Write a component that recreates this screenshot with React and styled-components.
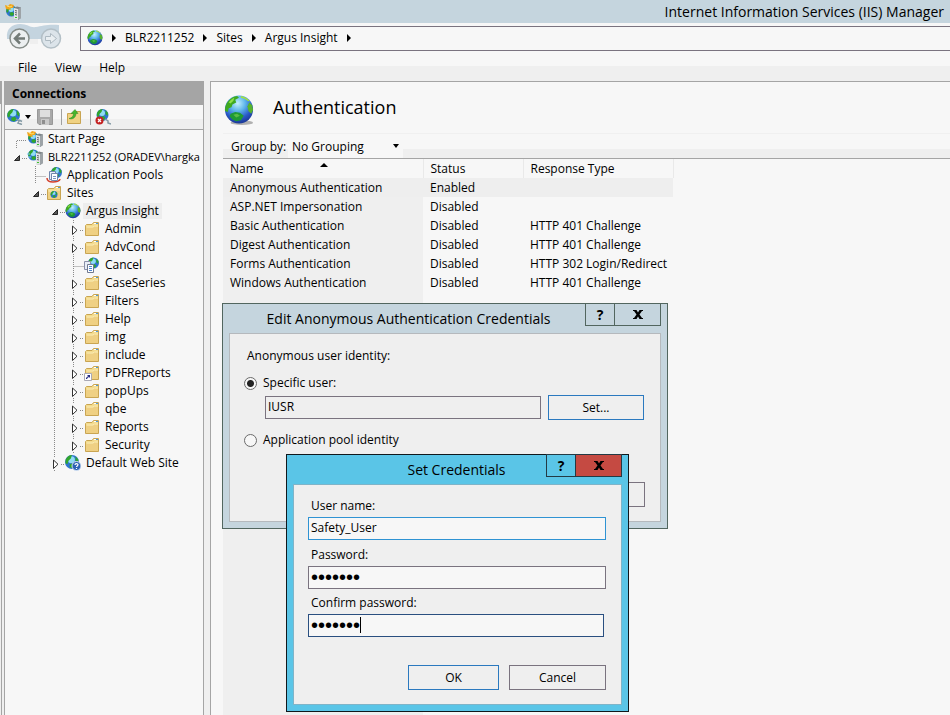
import React, { useId, useState } from "react";
import styled, { createGlobalStyle } from "styled-components";

const Global = createGlobalStyle`
  * { box-sizing: border-box; }
  body {
    margin: 0;
    background: #efefef;
    color: #000;
    font: 12px/18px "Open Sans", "Noto Sans", sans-serif;
  }
  button, input, select { font: inherit; color: inherit; border-radius: 0; }
`;

/* ---------- icons ---------- */

function Globe({ size = 16, shadow = false }) {
  const id = useId();
  return (
    <svg width={size} height={size} viewBox="0 0 32 32" aria-hidden="true">
      <defs>
        <radialGradient id={id} cx="45%" cy="28%" r="70%">
          <stop offset="0" stopColor="#c4f1fc" />
          <stop offset="0.4" stopColor="#5cb4ea" />
          <stop offset="0.75" stopColor="#2a5ac8" />
          <stop offset="1" stopColor="#1c3a9a" />
        </radialGradient>
      </defs>
      {shadow && <ellipse cx="19" cy="29.5" rx="12" ry="2.5" fill="#b0b0b0" />}
      <circle cx="16" cy="15.5" r="15" fill={`url(#${id})`} />
      <path d="M1 17C1 8 7 2 14 1L16 3 12 5 13 8 9 10 8 13 5 14 4 18Z" fill="#3faa20" />
      <path d="M5 8C7 5 9 4 11 3L10 6 7 9Z" fill="#8fe048" />
      <path d="M18 1C22 1.500 26 4 28 7L25 6 22 4 18 3Z" fill="#a5e23c" />
      <path d="M27 8L30 11 31 16 29 20 26 17 25 12Z" fill="#57b32d" />
      <path d="M7 20L12 18 17 19 21 22 18 27 13 28 9 26 6 23Z" fill="#1f9a34" />
      <path d="M10 21L14 20 17 22 13 24Z" fill="#59bd45" />
    </svg>
  );
}

const Server = () => (
  <>
    <path d="M9 4L12 2.500 16 3.500V14L13 16 9 15Z" fill="#7d8387" />
    <path d="M9 4L13 5V16L9 15Z" fill="#e2e5e6" />
    <path d="M13 5L16 3.500V14L13 16Z" fill="#9da3a7" />
    <path d="M10 6.500L12 7M10 8.500L12 9M10 10.500L12 11" stroke="#63686c" />
    <path d="M10 13.500h2" stroke="#3fc12e" />
  </>
);

const SmallGlobe = ({ x = 6, y = 6, r = 5.5 }) => (
  <g transform={`translate(${x} ${y}) scale(${r / 6})`}>
    <circle r="6" fill="#2f74d2" />
    <circle cx="-0.500" cy="-2" r="3" fill="#8fdcf5" />
    <path d="M-5.500-2C-4-5-2-6 0-6L-1-3-3-1-4 2-5.600 1ZM-2 2L1 1 3 3 1 5.500-2 4.500ZM3-5L5.500-2 5 1 3-1Z" fill="#31a62c" />
  </g>
);

const Svg16 = ({ children }) => (
  <svg width="16" height="16" viewBox="0 0 16 16" fill="none" aria-hidden="true">{children}</svg>
);

const StartIcon = () => (
  <Svg16>
    <SmallGlobe x={6.5} y={7} />
    <path d="M0 1L3 2 5 0 9 1 8 4 5 4 6 6 1 5Z" fill="#f0a51c" />
    <path d="M2 2L5 3 7 2" stroke="#ffe06a" />
    <Server />
  </Svg16>
);
const ServerIcon = () => (
  <Svg16><SmallGlobe x={6.5} y={6} /><path d="M0 5h3M1 8h3" stroke="#7ecbed" /><Server /></Svg16>
);
const PoolsIcon = () => (
  <Svg16>
    <SmallGlobe x={10.500} y={5.500} />
    <path d="M1 11C1 14 4 15 7 15S14 14 14 12" stroke="#d3402c" strokeWidth="1.500" />
    <path d="M3.500 4.500h6v8h-6z" fill="#e8eef7" stroke="#7387ac" />
    <path d="M5.500 6.500h6v7h-6z" fill="#fff" stroke="#7387ac" />
    <path d="M7 9.500h3M7 11.500h3" stroke="#7994c0" />
  </Svg16>
);
const FolderArt = () => (
  <>
    <path d="M1.500 4.500L2.500 3.500H8L9.500 1.500H14.500V14.500H1.500Z" fill="#f4dc8d" stroke="#c9a552" />
    <path d="M10 2.500h4" stroke="#fff" />
    <path d="M12 2.500h2" stroke="#4f9bd8" />
    <path d="M2 5.500H9L10.500 4.500H14V14H2Z" fill="#efd083" />
    <path d="M2.500 6h6.500L10.500 5H14" stroke="#fbefb9" />
  </>
);
const FolderIcon = () => <Svg16><FolderArt /></Svg16>;
const SitesIcon = () => <Svg16><FolderArt /><SmallGlobe x={8} y={9.5} r={3.5} /></Svg16>;
const LinkFolderIcon = () => (
  <Svg16>
    <FolderArt />
    <path d="M0.500 8.500h7v7h-7z" fill="#fff" stroke="#a9a9b5" />
    <path d="M2.500 14C2.500 12.500 3 12 5 11.500" stroke="#252c86" strokeWidth="1.200" />
    <path d="M3 10H6V13Z" fill="#252c86" />
  </Svg16>
);
const PageIcon = () => (
  <Svg16>
    <SmallGlobe x={9.500} y={6} />
    <path d="M0.500 4.500h6v8h-6z" fill="#e8eef7" stroke="#8990a8" />
    <path d="M3.500 7.500h6v8h-6z" fill="#fff" stroke="#70798f" />
    <path d="M5 9.500h3M5 11.500h3M5 13.500h3" stroke="#4d86d2" />
  </Svg16>
);
const HelpGlobeIcon = () => (
  <Svg16>
    <SmallGlobe x={7} y={7} r={7} />
    <circle cx="11.500" cy="11" r="4.500" fill="#2c62b4" stroke="#d6e4f5" />
    <path d="M10 10C10 8.200 13 8.200 13 9.800 13 11 11.500 10.800 11.500 12M11.500 13v1" stroke="#fff" strokeWidth="1.200" />
  </Svg16>
);
const ConnectIcon = () => (
  <Svg16>
    <SmallGlobe x={6.500} y={6.500} r={6.5} />
    <path d="M9 10L12 12 11 14 15 15.500M12 11L15 12.500" stroke="#849aa5" strokeWidth="1.500" />
  </Svg16>
);
const DisconnectIcon = () => (
  <Svg16>
    <SmallGlobe x={7.500} y={6} r={6} />
    <path d="M10 10L13 12 13 14 16 15" stroke="#849aa5" strokeWidth="1.500" />
    <circle cx="4.500" cy="11.500" r="4" fill="#c42323" />
    <path d="M3 10L6 13M6 10L3 13" stroke="#fff" strokeWidth="1.300" />
  </Svg16>
);
const SaveIcon = () => (
  <Svg16>
    <path d="M0.500 0.500H15.500V15.500H2L0.500 14Z" fill="#a9a9a9" stroke="#989898" />
    <path d="M3 1h10v7H3z" fill="#dedede" />
    <path d="M4 10h8v6H4z" fill="#c9c9c9" />
    <path d="M5 11h3v4H5z" fill="#8e8e8e" />
  </Svg16>
);
const UpFolderIcon = () => (
  <Svg16>
    <path d="M1.500 4.500H8L9.500 2.500H14.500V14.500H1.500Z" fill="#f0d283" stroke="#c9a552" />
    <path d="M3 9.500C6 9 7.500 7 7.500 4.500H5L9 0.500 12 4.500H10C10 8 7 11 3 9.500Z" fill="#45b62d" stroke="#2c8b22" strokeWidth="0.500" />
  </Svg16>
);

const NavIcon = () => (
  <svg width="56" height="28" viewBox="0 0 56 28" fill="none" aria-hidden="true">
    <path d="M1 14C0 5 6 0 14 0C22 0 24 4 30 3C36 2 42 0 53 1V15H1Z" fill="#c4d4df" />
    <path d="M24 15h8v5h-8z" fill="#efefef" />
    <circle cx="13.500" cy="14.500" r="9.500" fill="#eceff0" stroke="#868d89" strokeWidth="1.500" />
    <path d="M19 14.500H10M14 9.500L9 14.500 14 19.500" stroke="#737b77" strokeWidth="2.500" />
    <circle cx="45" cy="14.500" r="9.500" fill="#dce4ea" stroke="#b3bfc6" strokeWidth="1.500" />
    <path d="M39.500 12.500h5V9.500l6 5-6 5v-3h-5z" fill="#e9eef1" stroke="#adb9c1" />
  </svg>
);

const Caret = () => (
  <svg width="6" height="8" viewBox="0 0 6 8" aria-hidden="true"><path d="M1 0L5 4 1 8Z" /></svg>
);
const DownCaret = () => (
  <svg width="6" height="4" viewBox="0 0 6 4" aria-hidden="true"><path d="M0 0H6L3 4Z" /></svg>
);
const CloseIcon = () => (
  <svg width="10" height="9" viewBox="0 0 10 9" aria-hidden="true">
    <path d="M0 0H3.500L5 2.500 6.500 0H10V1H9L6.500 4.500 9 8H10V9H6.500L5 6.500 3.500 9H0V8H1L3.500 4.500 1 1H0Z" />
  </svg>
);

/* ---------- frame ---------- */

const Shell = styled.div`
  position: relative;
  display: flex;
  flex-direction: column;
  min-height: 100vh;
  overflow: hidden;
`;
const TitleBar = styled.header`
  display: flex;
  align-items: center;
  justify-content: space-between;
  height: 23px;
  padding: 0 6px 0 5px;
  background: #c5d5de;
`;
const AppTitle = styled.h1`
  margin: 0;
  font-size: 14px;
  font-weight: 400;
  white-space: nowrap;
`;
const NavBar = styled.nav`
  display: flex;
  align-items: center;
  gap: 18px;
  height: 30px;
  padding-left: 6px;
  background: #f7f7f7;
`;
const NavButtons = styled.button`
  display: flex;
  padding: 0;
  border: 0;
  background: none;
`;
const AddressBar = styled.div`
  flex: 1;
  display: flex;
  align-items: center;
  gap: 8px;
  height: 25px;
  padding-left: 6px;
  border: 1px solid #7a737f;
  border-right: 0;
`;
const Crumb = styled.a`
  color: inherit;
  text-decoration: none;
  white-space: nowrap;
`;
const MenuBar = styled.div`
  display: flex;
  align-items: center;
  gap: 18px;
  height: 28px;
  padding: 2px 0 0 18px;
  background: linear-gradient(#f7f7f7 13px, #efefef 13px);
`;
const MenuItem = styled.button`
  padding: 0;
  border: 0;
  background: none;
`;
const Workspace = styled.div`
  flex: 1;
  display: flex;
  gap: 6px;
`;
const Edge = styled.div`
  width: 2px;
  margin-right: -4px;
  border-right: 1px solid #a5a5a5;
  background: linear-gradient(#a5a5a5 23px, #efefef 23px);
`;

/* ---------- connections ---------- */

const Connections = styled.aside`
  flex: none;
  width: 200px;
  border: 1px solid #a5a5a5;
  border-bottom: 0;
  background: #f7f7f7;
  overflow: hidden;
`;
const PanelTitle = styled.h2`
  margin: 0;
  padding-left: 7px;
  height: 23px;
  font-size: 12px;
  line-height: 24px;
  background: #a5a5a5;
`;
const ToolBar = styled.div`
  display: flex;
  align-items: center;
  height: 25px;
  padding-left: 2px;
  border-bottom: 1px solid #a5a5a5;
  background: linear-gradient(#f7f7f7 14px, #efefef 14px);
`;
const Tool = styled.button`
  display: flex;
  align-items: center;
  gap: 2px;
  padding: 0;
  margin-right: ${(p) => p.$gap || 0}px;
  border: 0;
  background: none;
`;
const Divider = styled.span`
  width: 1px;
  height: 16px;
  margin-right: 4px;
  background: #a0a0a0;
`;
const Tree = styled.ul`
  margin: 0;
  padding: 0 0 0 3px;
  list-style: none;
`;
const TreeRow = styled.li`
  display: flex;
  align-items: center;
  height: 18px;
  white-space: nowrap;
  svg { flex: none; }
`;
const TreeLabel = styled.span`
  margin-left: 2px;
  padding: 0 3px;
  font-size: ${(p) => (p.$compact ? 11 : 12)}px;
  line-height: 16px;
  background: ${(p) => (p.$selected ? "#ededed" : "none")};
`;

function Guide({ kind }) {
  const dots = { stroke: "#8a8a8a", strokeDasharray: "1 1" };
  return (
    <svg width="19" height="18" viewBox="0 0 19 18" fill="none" aria-hidden="true">
      {kind === "line" && <path d="M8.500 0V18" {...dots} />}
      {kind === "first" && <path d="M8.500 18V10.500H19" {...dots} />}
      {kind === "branch" && <path d="M8.500 0V18M8.500 10.500H19" {...dots} />}
      {kind === "open" && (
        <>
          <path d="M14 10.500H19" {...dots} />
          <path d="M11.500 7.500V12.500H6.500Z" fill="#595959" stroke="#262626" />
        </>
      )}
      {kind === "closed" && (
        <>
          <path d="M8.500 0V4M8.500 16V18M15 10.500H19" {...dots} />
          <path d="M7.500 6V14.500L12 10.250Z" fill="#fff" stroke="#333" />
        </>
      )}
    </svg>
  );
}

const folder = (label) => ({ label, icon: <FolderIcon />, guides: ["none", "none", "line", "closed"] });
const tree = [
  { label: "Start Page", icon: <StartIcon />, guides: ["first"] },
  { label: "BLR2211252 (ORADEV\\hargka", icon: <ServerIcon />, guides: ["open"], compact: true },
  { label: "Application Pools", icon: <PoolsIcon />, guides: ["none", "branch"] },
  { label: "Sites", icon: <SitesIcon />, guides: ["none", "open"] },
  { label: "Argus Insight", icon: <Globe />, guides: ["none", "none", "open"], selected: true },
  folder("Admin"),
  folder("AdvCond"),
  { label: "Cancel", icon: <PageIcon />, guides: ["none", "none", "line", "branch"] },
  folder("CaseSeries"),
  folder("Filters"),
  folder("Help"),
  folder("img"),
  folder("include"),
  { ...folder("PDFReports"), icon: <LinkFolderIcon /> },
  folder("popUps"),
  folder("qbe"),
  folder("Reports"),
  folder("Security"),
  { label: "Default Web Site", icon: <HelpGlobeIcon />, guides: ["none", "none", "closed"] },
];

/* ---------- feature view ---------- */

const Feature = styled.main`
  flex: 1;
  display: flex;
  flex-direction: column;
  min-width: 0;
  padding-left: 12px;
  border: 1px solid #a5a5a5;
  border-width: 1px 0 0 1px;
  background: #f7f7f7;
`;
const FeatureHead = styled.div`
  display: flex;
  align-items: center;
  gap: 19px;
  height: 51px;
  padding: 4px 0 0 1px;
`;
const FeatureTitle = styled.h2`
  margin: 0;
  padding-bottom: 6px;
  font-size: 18px;
  line-height: 28px;
  font-weight: 400;
`;
const GroupBar = styled.div`
  display: flex;
  height: 26px;
  padding-left: 8px;
  border-bottom: 1px solid #a5a5a5;
  border-top: 1px solid #f0f0f0;
  background: linear-gradient(#f7f7f7 15px, #efefef 15px);
`;
const GroupLabel = styled.label`
  width: 57px;
  line-height: 26px;
  white-space: nowrap;
`;
const SelectWrap = styled.span`
  display: flex;
  align-items: center;
  width: 115px;
  padding-right: 4px;
  background: #f7f7f7;
  svg { flex: none; pointer-events: none; }
`;
const Select = styled.select`
  flex: 1;
  min-width: 0;
  height: 24px;
  padding: 2px 0 0 4px;
  border: 0;
  background: none;
  appearance: none;
`;
const ListArea = styled.div`
  flex: 1;
  background: linear-gradient(90deg, #efefef 200px, #f7f7f7 200px);
`;
const Table = styled.table`
  width: 450px;
  table-layout: fixed;
  border-collapse: collapse;
`;
const Th = styled.th`
  width: ${(p) => p.$w}px;
  height: 19px;
  padding: 0 0 0 7px;
  border-right: 1px solid #e9e9e9;
  background: #f7f7f7;
  font-weight: 400;
  line-height: 18px;
  text-align: left;
  white-space: nowrap;
`;
const HeadCell = styled.span`
  display: grid;
  grid-template-columns: 90px 1fr;
  align-items: start;
`;
const Row = styled.tr`
  background: ${(p) => (p.$selected ? "#eee" : "none")};
`;
const Td = styled.td`
  height: 19px;
  padding: 0 0 0 7px;
  line-height: 18px;
  white-space: nowrap;
`;

const rows = [
  ["Anonymous Authentication", "Enabled", ""],
  ["ASP.NET Impersonation", "Disabled", ""],
  ["Basic Authentication", "Disabled", "HTTP 401 Challenge"],
  ["Digest Authentication", "Disabled", "HTTP 401 Challenge"],
  ["Forms Authentication", "Disabled", "HTTP 302 Login/Redirect"],
  ["Windows Authentication", "Disabled", "HTTP 401 Challenge"],
];

/* ---------- dialogs ---------- */

const Dialog = styled.section`
  position: absolute;
  left: ${(p) => p.$x}px;
  top: ${(p) => p.$y}px;
  display: flex;
  flex-direction: column;
  width: ${(p) => p.$w}px;
  padding: 0 6px 6px;
  border: 1px solid ${(p) => (p.$active ? "#10181c" : "#52665f")};
  background: ${(p) => (p.$active ? "#5ac5e7" : "#c5d5de")};
`;
const DialogBar = styled.div`
  display: flex;
  height: 29px;
`;
const DialogTitle = styled.h3`
  flex: 1;
  margin: 0;
  padding-left: ${(p) => p.$inset}px;
  font-size: 14px;
  font-weight: 400;
  line-height: 30px;
  text-align: center;
  white-space: nowrap;
`;
const Caption = styled.button`
  display: flex;
  align-items: center;
  justify-content: center;
  width: ${(p) => (p.$close ? 47 : 30)}px;
  height: 23px;
  margin: -1px 0 0 ${(p) => (p.$close ? -1 : 0)}px;
  padding: 0;
  border: 1px solid ${(p) => (p.$active ? "#233a44" : "#52665f")};
  background: ${(p) => (p.$close && p.$active ? "#c54a42" : "none")};
  font-size: 14px;
  font-weight: 700;
`;
const Client = styled.div`
  display: flex;
  flex-direction: column;
  padding: ${(p) => p.$pad};
  border: 1px solid ${(p) => (p.$active ? "#7fb4c8" : "#b5b9bd")};
  background: #efefef;
`;
const Text = styled.p`
  margin: 0 0 9px 3px;
`;
const Choice = styled.label`
  display: flex;
  align-items: center;
  gap: 6px;
  height: 18px;
`;
const Radio = styled.input`
  appearance: none;
  width: 13px;
  height: 13px;
  margin: 0;
  border: 1px solid #6b6b6b;
  border-radius: 50%;
  background: #f7f7f7;
  &:checked { background: radial-gradient(circle, #222 3px, #f7f7f7 4px); }
`;
const UserRow = styled.div`
  display: flex;
  align-items: center;
  gap: 7px;
  margin: 3px 0 11px;
  padding: 0 1px 0 21px;
`;
const Field = styled.input`
  flex: ${(p) => (p.$grow ? 1 : "none")};
  min-width: 0;
  width: 100%;
  height: 23px;
  padding: 0 2px 2px;
  border: 1px solid ${(p) => p.$edge || "#7a737f"};
  outline: 0;
  background: ${(p) => (p.readOnly ? "#efefef" : "#f7f7f7")};
`;
const FieldLabel = styled.label`
  padding: 0 0 2px 3px;
  line-height: 18px;
  margin-top: ${(p) => p.$top}px;
`;
const Secret = styled(Field)`
  display: block;
  padding: 0 2px;
  font-family: "Liberation Sans", sans-serif;
  font-size: 20px;
  caret-color: transparent;
`;
const FocusedField = styled.div`
  position: relative;
  margin-right: 2px;
  &::after {
    content: "";
    position: absolute;
    left: 52px;
    top: 3px;
    width: 1px;
    height: 16px;
    background: #000;
  }
`;
const Actions = styled.div`
  display: flex;
  justify-content: flex-end;
  gap: 10px;
  margin-top: ${(p) => p.$top}px;
`;
const PushButton = styled.button`
  width: ${(p) => p.$w}px;
  height: 25px;
  padding: 0;
  border: 1px solid ${(p) => (p.$primary ? "#2b79bf" : "#7a737f")};
  background: #efefef;
`;

export default function App() {
  const [mode, setMode] = useState("user");
  return (
    <>
      <Global />
      <Shell>
        <TitleBar>
          <StartIcon />
          <AppTitle>Internet Information Services (IIS) Manager</AppTitle>
        </TitleBar>
        <NavBar>
          <NavButtons aria-label="Back or forward"><NavIcon /></NavButtons>
          <AddressBar>
            <Globe />
            <Caret /><Crumb href="#server">BLR2211252</Crumb>
            <Caret /><Crumb href="#sites">Sites</Crumb>
            <Caret /><Crumb href="#argus">Argus Insight</Crumb>
            <Caret />
          </AddressBar>
        </NavBar>
        <MenuBar>
          <MenuItem>File</MenuItem>
          <MenuItem>View</MenuItem>
          <MenuItem>Help</MenuItem>
        </MenuBar>
        <Workspace>
          <Edge />
          <Connections>
            <PanelTitle>Connections</PanelTitle>
            <ToolBar>
              <Tool $gap={6} aria-label="Connect"><ConnectIcon /><DownCaret /></Tool>
              <Tool $gap={8} aria-label="Save"><SaveIcon /></Tool>
              <Divider />
              <Tool $gap={8} aria-label="Up"><UpFolderIcon /></Tool>
              <Divider />
              <Tool aria-label="Disconnect"><DisconnectIcon /></Tool>
            </ToolBar>
            <Tree>
              {tree.map((n) => (
                <TreeRow key={n.label}>
                  {n.guides.map((g, i) => <Guide key={i} kind={g} />)}
                  {n.icon}
                  <TreeLabel $selected={n.selected} $compact={n.compact}>{n.label}</TreeLabel>
                </TreeRow>
              ))}
            </Tree>
          </Connections>
          <Feature>
            <FeatureHead>
              <Globe size={30} shadow />
              <FeatureTitle>Authentication</FeatureTitle>
            </FeatureHead>
            <GroupBar>
              <GroupLabel htmlFor="group">Group by:</GroupLabel>
              <SelectWrap>
                <Select id="group"><option>No Grouping</option></Select>
                <DownCaret />
              </SelectWrap>
            </GroupBar>
            <ListArea>
              <Table>
                <thead>
                  <tr>
                    <Th $w={200}>
                      <HeadCell>
                        Name
                        <svg width="8" height="8" viewBox="0 0 8 8" aria-hidden="true"><path d="M0 7L4 3 8 7Z" /></svg>
                      </HeadCell>
                    </Th>
                    <Th $w={100}>Status</Th>
                    <Th $w={150}>Response Type</Th>
                  </tr>
                </thead>
                <tbody>
                  {rows.map((r, i) => (
                    <Row key={r[0]} $selected={i === 0}>
                      {r.map((c, j) => <Td key={j}>{c}</Td>)}
                    </Row>
                  ))}
                </tbody>
              </Table>
            </ListArea>
          </Feature>
        </Workspace>

        <Dialog $x={222} $y={303} $w={446} role="dialog" aria-labelledby="edit-title">
          <DialogBar>
            <DialogTitle id="edit-title" $inset={3}>Edit Anonymous Authentication Credentials</DialogTitle>
            <Caption aria-label="Help">?</Caption>
            <Caption $close aria-label="Close"><CloseIcon /></Caption>
          </DialogBar>
          <Client $pad="13px 15px 14px 14px">
            <Text>Anonymous user identity:</Text>
            <Choice>
              <Radio type="radio" name="identity" checked={mode === "user"} onChange={() => setMode("user")} />
              Specific user:
            </Choice>
            <UserRow>
              <Field $grow readOnly aria-label="Specific user" value="IUSR" />
              <PushButton $w={96} $primary>Set...</PushButton>
            </UserRow>
            <Choice>
              <Radio type="radio" name="identity" checked={mode === "pool"} onChange={() => setMode("pool")} />
              Application pool identity
            </Choice>
            <Actions $top={33}>
              <PushButton $w={96} aria-label="Cancel" />
            </Actions>
          </Client>
        </Dialog>

        <Dialog $active $x={286} $y={454} $w={343} role="dialog" aria-labelledby="set-title">
          <DialogBar>
            <DialogTitle id="set-title" $inset={74}>Set Credentials</DialogTitle>
            <Caption $active aria-label="Help">?</Caption>
            <Caption $active $close aria-label="Close"><CloseIcon /></Caption>
          </DialogBar>
          <Client $active $pad="12px 15px 14px 14px">
            <FieldLabel $top={0} htmlFor="user">User name:</FieldLabel>
            <Field id="user" $edge="#2f93d3" defaultValue="Safety_User" />
            <FieldLabel $top={6} htmlFor="pass">Password:</FieldLabel>
            <Secret id="pass" type="password" defaultValue="1234567" />
            <FieldLabel $top={5} htmlFor="confirm">Confirm password:</FieldLabel>
            <FocusedField>
              <Secret id="confirm" type="password" $edge="#2a4f80" defaultValue="1234567" autoFocus />
            </FocusedField>
            <Actions $top={28}>
              <PushButton $w={91} $primary>OK</PushButton>
              <PushButton $w={97}>Cancel</PushButton>
            </Actions>
          </Client>
        </Dialog>
      </Shell>
    </>
  );
}
